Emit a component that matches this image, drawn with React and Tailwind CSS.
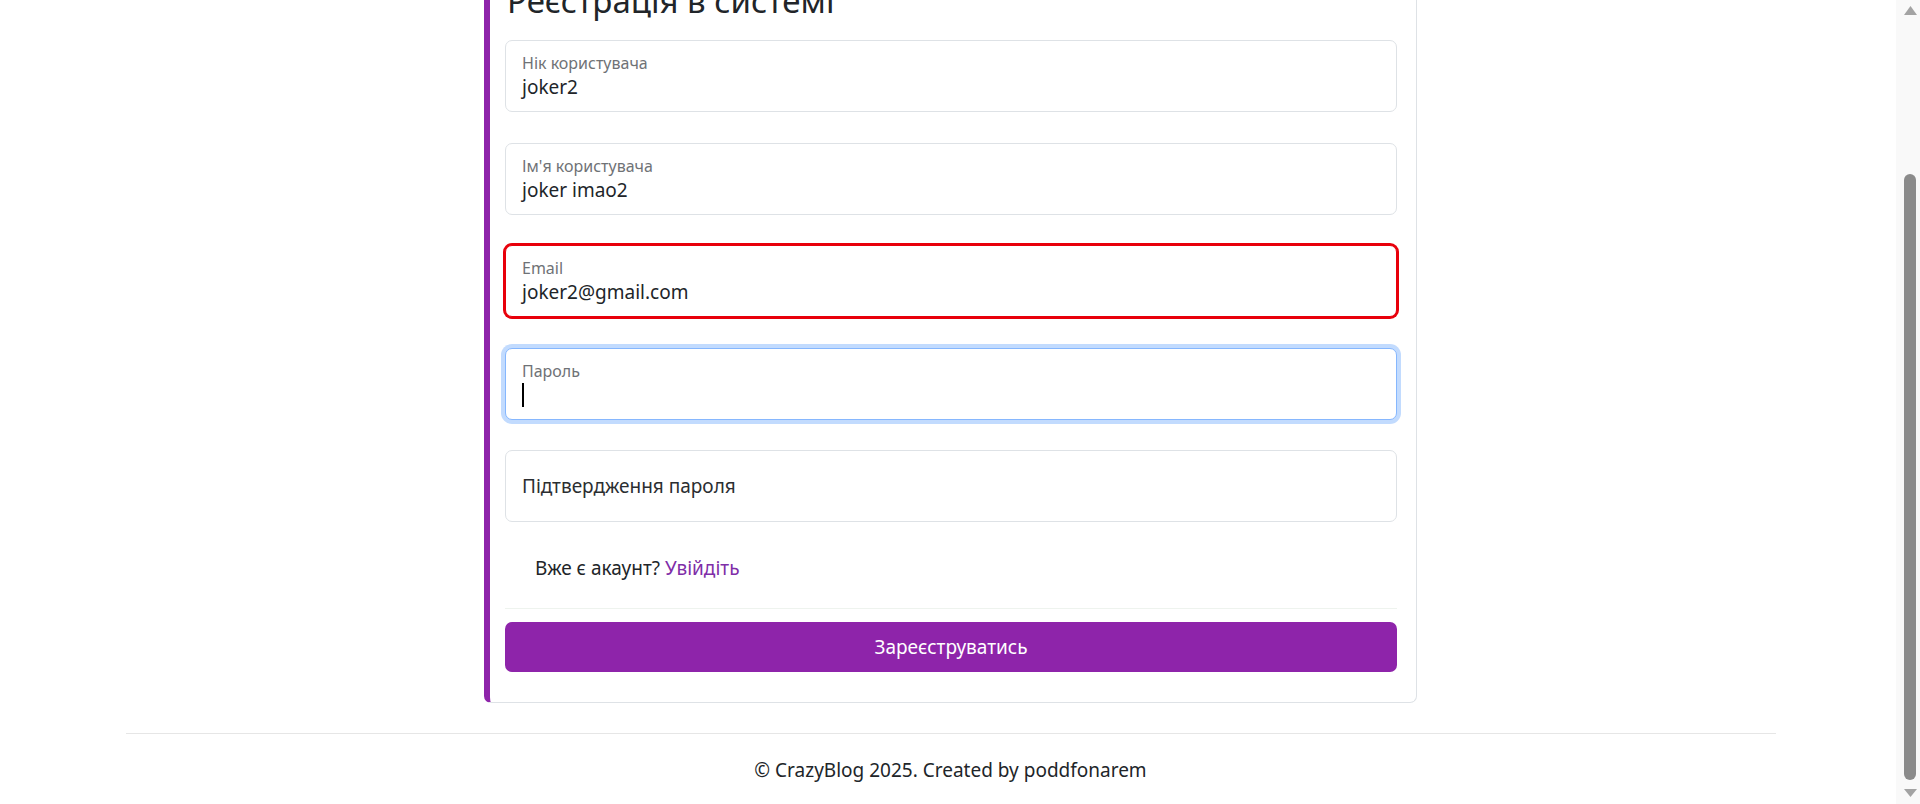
const fields = [
  { label: 'Нік користувача', value: 'joker2', state: 'normal' },
  { label: "Ім'я користувача", value: 'joker imao2', state: 'normal' },
  { label: 'Email', value: 'joker2@gmail.com', state: 'error' },
  { label: 'Пароль', value: '', state: 'focus' },
]

const FloatingField = ({ label, value, state }) => {
  let box = 'border border-[#dee2e6]'
  if (state === 'error') box = 'border border-[#e8000b] shadow-[0_0_0_2px_#e8000b]'
  if (state === 'focus') box = 'border border-[#86b7fe] shadow-[0_0_0_4px_rgba(13,110,253,0.25)]'

  return (
    <div className={`h-[72px] rounded-[7px] bg-white px-[16px] pt-[10px] ${box}`}>
      <div className="text-[16px] leading-[24px] text-[#6f7276]">{label}</div>
      {state === 'focus' ? (
        <div className="h-[24px] w-[2px] bg-black" />
      ) : (
        <div className="text-[19px] leading-[24px] text-[#212529]">{value}</div>
      )}
    </div>
  )
}

const Scrollbar = () => (
  <div className="flex h-[804px] w-[24px] flex-col bg-[#f9f9f9] pl-[8px]">
    <svg className="mt-[6px]" width="13" height="9" viewBox="0 0 13 9">
      <path d="M6.5 0 L13 9 L0 9 Z" fill="#a3a3a3" />
    </svg>
    <div className="mt-[159px] h-[606px] w-[12px] rounded-full bg-[#8b8b8b]" />
    <svg className="mt-[9px]" width="13" height="8" viewBox="0 0 13 8">
      <path d="M0 0 L13 0 L6.5 8 Z" fill="#a3a3a3" />
    </svg>
  </div>
)

export default function App() {
  return (
    <div className="flex h-[804px] overflow-hidden bg-white font-['Noto_Sans','Open_Sans',sans-serif] text-[#212529]">
      <div className="flex flex-1 flex-col items-center pl-[5px]">
        {/* Register card */}
        <div className="w-[933px] rounded-b-[7px] border border-t-0 border-[#dee2e6] border-l-[6px] border-l-[#8e24aa] pb-[30px] pl-[15px] pr-[19px]">
          <h3 className="-mt-[20px] mb-[18px] pl-[2px] text-[33px] leading-[42px] text-[#212529]">Реєстрація в системі</h3>

          {fields.map(f => (
            <div key={f.label} className="mb-[30.5px]">
              <FloatingField {...f} />
            </div>
          ))}

          <div className="flex h-[72px] items-center rounded-[7px] border border-[#dee2e6] px-[16px]">
            <span className="text-[19px] leading-[30px] text-[#2b2e31]">Підтвердження пароля</span>
          </div>

          <div className="pb-[25px] pl-[30px] pt-[31px] text-[19px] leading-[30px]">
            Вже є акаунт? <a href="#" className="text-[#7f2ea8]">Увійдіть</a>
          </div>

          <div className="border-t border-[#eef3ee] pt-[13px]">
            <button className="h-[50px] w-full rounded-[7px] bg-[#8e24aa] text-[19px] text-white">
              Зареєструватись
            </button>
          </div>
        </div>

        {/* Footer */}
        <footer className="mt-[30px] w-[1650px] border-t border-[#e6e6e6] pt-[21px] text-center text-[19px] leading-[30px] text-[#212529]">
          © CrazyBlog 2025. Created by poddfonarem
        </footer>
      </div>
      <Scrollbar />
    </div>
  )
}
